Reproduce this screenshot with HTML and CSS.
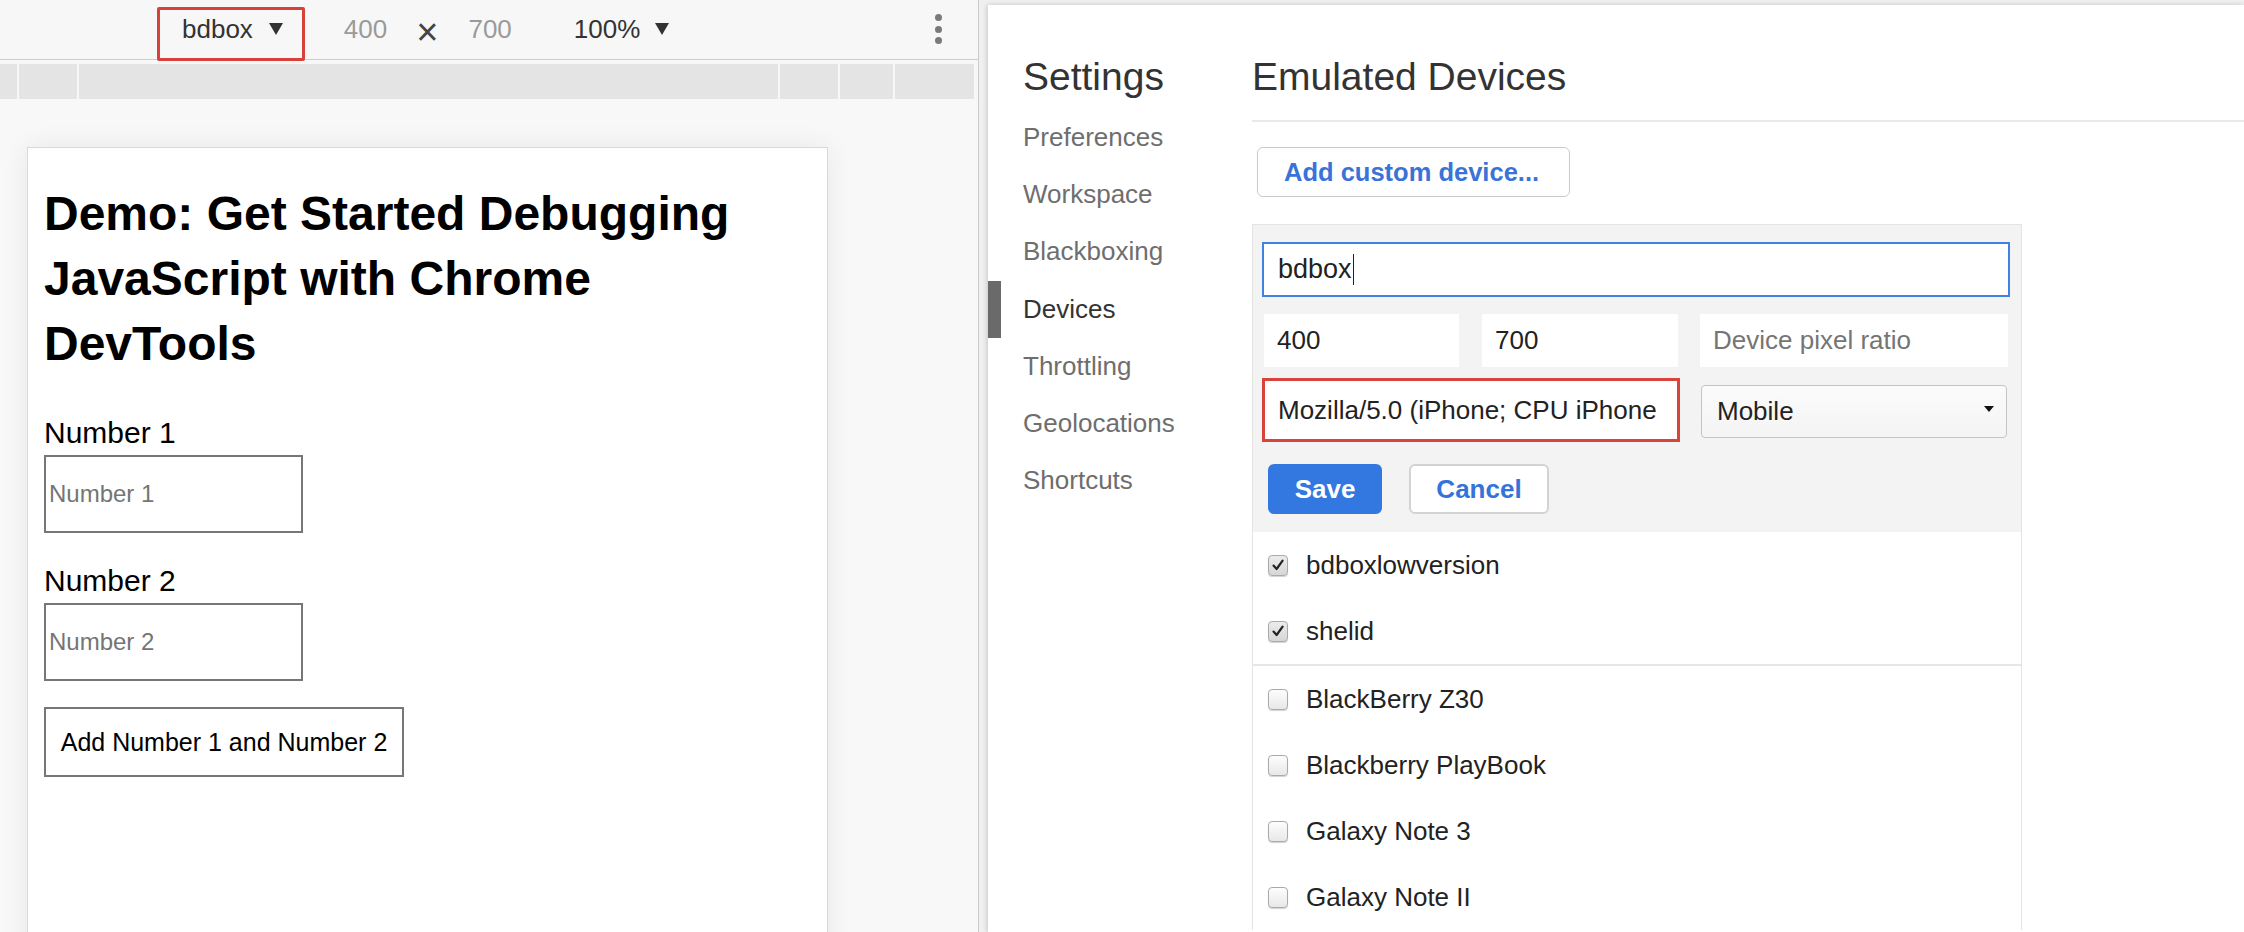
FILE: index.html
```html
<!DOCTYPE html>
<html lang="en">
<head>
<meta charset="utf-8">
<title>DevTools – Emulated Devices</title>
<link rel="stylesheet" href="styles.css">
</head>
<body>
<div class="app">
  <section class="device-pane">
    <div class="toolbar">
      <div class="device-select"><span>bdbox</span><span class="tri"></span></div>
      <span class="dim dim-w">400</span>
      <span class="times">×</span>
      <span class="dim dim-h">700</span>
      <span class="zoom"><span>100%</span><span class="tri"></span></span>
      <span class="kebab"><i></i><i></i><i></i></span>
    </div>
    <div class="media-strip">
      <span></span><span></span><span></span><span></span><span></span><span></span>
    </div>
    <div class="viewport">
      <div class="page-card">
        <h1 class="demo-title">Demo: Get Started Debugging JavaScript with Chrome DevTools</h1>
        <label class="demo-label" for="n1">Number 1</label>
        <input class="demo-input" id="n1" placeholder="Number 1">
        <label class="demo-label demo-label-2" for="n2">Number 2</label>
        <input class="demo-input" id="n2" placeholder="Number 2">
        <button class="demo-button">Add Number 1 and Number 2</button>
      </div>
    </div>
  </section>

  <section class="settings-area">
    <div class="settings">
      <nav class="nav">
        <h2 class="nav-title">Settings</h2>
        <ul class="nav-list">
          <li class="nav-item">Preferences</li>
          <li class="nav-item">Workspace</li>
          <li class="nav-item">Blackboxing</li>
          <li class="nav-item is-selected">Devices</li>
          <li class="nav-item">Throttling</li>
          <li class="nav-item">Geolocations</li>
          <li class="nav-item">Shortcuts</li>
        </ul>
      </nav>
      <main class="content">
        <h2 class="content-title">Emulated Devices</h2>
        <button class="add-btn">Add custom device...</button>

        <div class="editor">
          <div class="field field-name">bdbox<span class="caret"></span></div>
          <div class="row row-size">
            <div class="field field-w">400</div>
            <div class="field field-h">700</div>
            <div class="field field-dpr placeholder">Device pixel ratio</div>
          </div>
          <div class="row row-ua">
            <div class="field field-ua">Mozilla/5.0 (iPhone; CPU iPhone</div>
            <div class="select"><span>Mobile</span><span class="select-arrow"></span></div>
          </div>
          <div class="row row-actions">
            <button class="btn-save">Save</button>
            <button class="btn-cancel">Cancel</button>
          </div>
        </div>

        <div class="device-list">
          <div class="group">
            <div class="device"><span class="cb checked"><svg viewBox="0 0 14 14" width="14" height="14"><path d="M2.5 7.6 L5.6 11 L11.6 2.6" fill="none" stroke="#222" stroke-width="2.2" stroke-linecap="round" stroke-linejoin="round"/></svg></span><span>bdboxlowversion</span></div>
            <div class="device"><span class="cb checked"><svg viewBox="0 0 14 14" width="14" height="14"><path d="M2.5 7.6 L5.6 11 L11.6 2.6" fill="none" stroke="#222" stroke-width="2.2" stroke-linecap="round" stroke-linejoin="round"/></svg></span><span>shelid</span></div>
          </div>
          <div class="group group-builtin">
            <div class="device"><span class="cb"></span><span>BlackBerry Z30</span></div>
            <div class="device"><span class="cb"></span><span>Blackberry PlayBook</span></div>
            <div class="device"><span class="cb"></span><span>Galaxy Note 3</span></div>
            <div class="device"><span class="cb"></span><span>Galaxy Note II</span></div>
          </div>
        </div>
      </main>
    </div>
  </section>
</div>
</body>
</html>
```

FILE: styles.css
```css
* { box-sizing: border-box; }

html, body {
  margin: 0;
  padding: 0;
}

body {
  width: 2244px;
  height: 932px;
  overflow: hidden;
  font-family: "Liberation Sans", Arial, Helvetica, sans-serif;
  color: #333;
  background: #f7f7f7;
}

.app {
  display: flex;
  height: 932px;
}

/* ---------- Left: device emulation pane ---------- */
.device-pane {
  width: 979px;
  flex: none;
  border-right: 1px solid #cbcbcb;
  background: #f7f7f7;
  overflow: hidden;
  display: flex;
  flex-direction: column;
}

.toolbar {
  height: 60px;
  flex: none;
  border-bottom: 1px solid #cdcdcd;
  display: flex;
  align-items: flex-start;
  padding: 14px 0 0 157px;
  font-size: 26px;
  line-height: 30px;
  color: #333;
}

.device-select {
  margin-top: -7px;
  height: 54px;
  border: 3px solid #d8403a;
  border-radius: 2px;
  padding: 4px 19px 0 22px;
  display: flex;
  align-items: flex-start;
  gap: 16px;
}

.tri {
  width: 0;
  height: 0;
  margin-top: 9px;
  border-left: 7px solid transparent;
  border-right: 7px solid transparent;
  border-top: 12px solid #333;
}

.dim { color: #9a9a9a; }
.dim-w { margin-left: 39px; }
.times {
  margin: 3px 0 0 29px;
  font-size: 38px;
  line-height: 30px;
  color: #444;
}
.dim-h { margin-left: 30px; }

.zoom {
  margin-left: 62px;
  display: flex;
  align-items: flex-start;
  gap: 15px;
}

.kebab {
  margin-left: 266px;
  display: flex;
  flex-direction: column;
  gap: 4.5px;
}
.kebab i {
  display: block;
  width: 7px;
  height: 7px;
  border-radius: 50%;
  background: #7a7a7a;
}

.media-strip {
  margin-top: 4px;
  height: 35px;
  width: 974px;
  flex: none;
  display: grid;
  grid-template-columns: 17px 58px 699px 58px 53px 79px;
  column-gap: 2px;
}
.media-strip span { background: #e4e4e4; }

.viewport {
  flex: 1;
  padding: 48px 0 0 27px;
  background: #f8f8f8;
}

.page-card {
  width: 801px;
  height: 900px;
  background: #fff;
  border: 1px solid #d9d9d9;
  box-shadow: 0 0 26px rgba(0, 0, 0, 0.07);
  padding: 0 16px;
  color: #000;
}

.demo-title {
  margin: 33px 0 0;
  max-width: 720px;
  font-size: 48px;
  line-height: 65px;
  font-weight: bold;
}

.demo-label {
  display: block;
  margin-top: 40px;
  font-size: 30px;
  line-height: 34px;
}
.demo-label-2 { margin-top: 31px; }

.demo-input {
  display: block;
  margin-top: 5px;
  width: 259px;
  height: 78px;
  border: 2px solid #777;
  padding: 0 3px;
  font-family: inherit;
  font-size: 24px;
  background: #fff;
}
.demo-input::placeholder { color: #757575; }

.demo-button {
  display: block;
  margin-top: 26px;
  width: 360px;
  height: 70px;
  border: 2px solid #777;
  background: #fff;
  font-family: inherit;
  font-size: 25px;
  color: #000;
  padding: 0;
}

/* ---------- Right: settings ---------- */
.settings-area {
  flex: 1;
  background: #f0f0f0;
  padding: 5px 0 0 9px;
  overflow: hidden;
}

.settings {
  height: 927px;
  background: #fff;
  box-shadow: -1px 0 5px rgba(0, 0, 0, 0.18);
  display: grid;
  grid-template-columns: 264px 1fr;
}

.nav { padding-top: 49px; }

.nav-title {
  margin: 0;
  padding-left: 35px;
  font-size: 39px;
  line-height: 45px;
  font-weight: normal;
  color: #333;
}

.nav-list {
  list-style: none;
  margin: 10px 0 0;
  padding: 0;
}

.nav-item {
  font-size: 26px;
  line-height: 57.2px;
  height: 57.2px;
  border-left: 13px solid transparent;
  padding-left: 22px;
  color: #6e6e6e;
}
.nav-item.is-selected {
  border-left-color: #6a6a6a;
  color: #333;
}

.content { padding-top: 49px; }

.content-title {
  margin: 0;
  font-size: 39px;
  line-height: 45px;
  font-weight: normal;
  color: #333;
  padding-bottom: 21px;
  border-bottom: 2px solid #e9e9e9;
}

.add-btn {
  display: block;
  margin: 25px 0 0 5px;
  width: 313px;
  height: 50px;
  border: 1px solid #c9c9c9;
  border-radius: 6px;
  background: #fff;
  padding: 0 0 0 26px;
  text-align: left;
  font-family: inherit;
  font-weight: bold;
  font-size: 25.5px;
  color: #3a73d8;
}

.editor {
  margin-top: 27px;
  width: 770px;
  background: #f3f3f3;
  border: 1px solid #e4e4e4;
  border-bottom: none;
  padding: 17px 11px 18px 9px;
}

.field {
  background: #fff;
  font-size: 26px;
  color: #222;
  display: flex;
  align-items: center;
  white-space: nowrap;
  overflow: hidden;
}
.field.placeholder { color: #757575; }

.field-name {
  width: 748px;
  height: 55px;
  border: 2px solid #4181e2;
  padding-left: 14px;
  font-size: 27px;
}
.caret {
  display: inline-block;
  width: 1.5px;
  height: 31px;
  margin-left: 1px;
  background: #222;
}

.row { display: flex; }

.row-size {
  margin: 17px 0 0 2px;
  height: 53px;
}
.row-size .field { height: 53px; padding-left: 13px; }
.field-w { width: 195px; }
.field-h { width: 196px; margin-left: 23px; }
.field-dpr { width: 308px; margin-left: 22px; }

.row-ua {
  margin-top: 11px;
  align-items: flex-start;
}
.field-ua {
  width: 418px;
  height: 64px;
  border: 3px solid #d8443b;
  padding-left: 13px;
}

.select {
  margin: 7px 0 0 21px;
  width: 306px;
  height: 53px;
  border: 1px solid #c4c4c4;
  border-radius: 4px;
  background: linear-gradient(#fbfbfb, #f4f4f4);
  padding: 0 12px 0 15px;
  display: flex;
  align-items: center;
  justify-content: space-between;
  font-size: 26px;
  color: #222;
}
.select-arrow {
  width: 0;
  height: 0;
  margin-top: -6px;
  border-left: 5px solid transparent;
  border-right: 5px solid transparent;
  border-top: 6px solid #111;
}

.row-actions { margin-top: 22px; }

.btn-save,
.btn-cancel {
  height: 50px;
  border-radius: 6px;
  font-family: inherit;
  font-weight: bold;
  font-size: 26px;
  padding: 0;
}
.btn-save {
  margin-left: 6px;
  width: 114px;
  border: none;
  background: #3377e0;
  color: #fff;
}
.btn-cancel {
  margin-left: 27px;
  width: 140px;
  border: 2px solid #d3d3d3;
  background: #fff;
  color: #3473dc;
}

.device-list {
  width: 770px;
  background: #fff;
  border-left: 1px solid #e4e4e4;
  border-right: 1px solid #e4e4e4;
}

.group-builtin { border-top: 2px solid #e6e6e6; }

.device {
  height: 66px;
  display: flex;
  align-items: center;
  gap: 18px;
  padding-left: 15px;
  font-size: 26px;
  color: #222;
}

.cb {
  width: 20px;
  height: 21px;
  flex: none;
  border: 1px solid #aaa;
  border-radius: 4px;
  background: linear-gradient(#fdfdfd, #e8e8e8);
  box-shadow: 0 1px 1px rgba(0, 0, 0, 0.18);
  display: flex;
  align-items: center;
  justify-content: center;
}
.cb.checked { background: linear-gradient(#ececec, #d6d6d6); }
```
